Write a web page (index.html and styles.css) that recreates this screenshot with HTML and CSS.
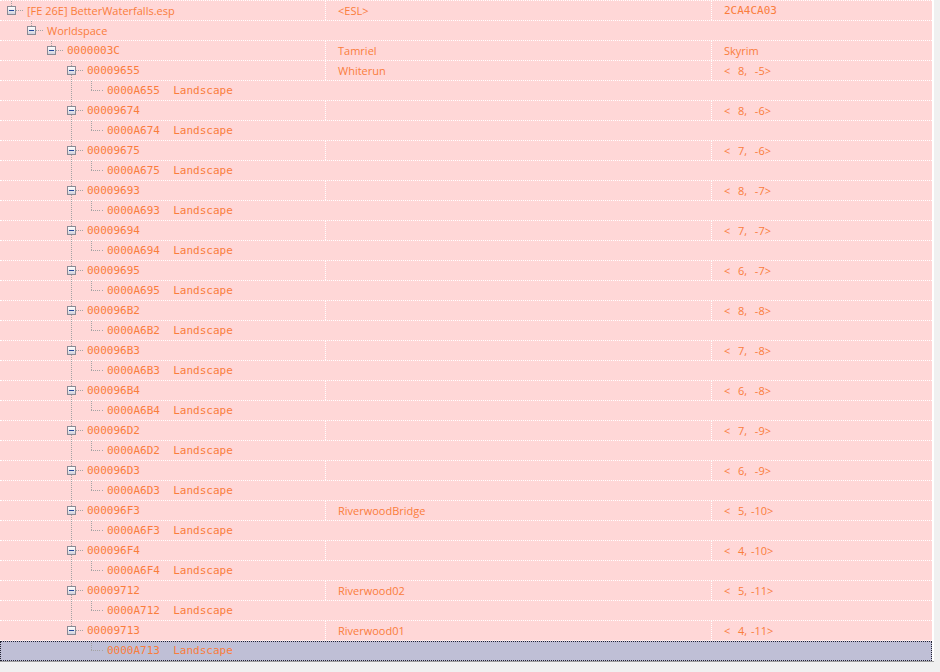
FILE: index.html
```html
<!DOCTYPE html>
<html>
<head>
<meta charset="utf-8">
<link rel="stylesheet" href="styles.css">
</head>
<body>
<div class="frame">
<div class="tree">
  <div class="row">
    <div class="c1"><span class="nu"><span class="box"></span></span><span class="stub"></span><span class="t">[FE 26E] BetterWaterfalls.esp</span></div>
    <div class="c2">&lt;ESL&gt;</div>
    <div class="c3 mono">2CA4CA03</div>
  </div>
  <div class="row">
    <div class="c1 span"><span class="i"></span><span class="nu"><span class="box"></span></span><span class="stub"></span><span class="t">Worldspace</span></div>
  </div>
  <div class="row">
    <div class="c1"><span class="i"></span><span class="i"></span><span class="nu"><span class="box"></span></span><span class="stub"></span><span class="t mono">0000003C</span></div>
    <div class="c2">Tamriel</div>
    <div class="c3">Skyrim</div>
  </div>

  <div class="row">
    <div class="c1"><span class="i"></span><span class="i"></span><span class="i"></span><span class="nud"><span class="box"></span></span><span class="stub"></span><span class="t mono">00009655</span></div>
    <div class="c2">Whiterun</div>
    <div class="c3 pre">&lt;  8,  -5&gt;</div>
  </div>
  <div class="row"><div class="c1 span"><span class="i"></span><span class="i"></span><span class="i"></span><span class="v"></span><span class="el"></span><span class="stub"></span><span class="t mono pre">0000A655  Landscape</span></div></div>

  <div class="row">
    <div class="c1"><span class="i"></span><span class="i"></span><span class="i"></span><span class="nud"><span class="box"></span></span><span class="stub"></span><span class="t mono">00009674</span></div>
    <div class="c2"></div>
    <div class="c3 pre">&lt;  8,  -6&gt;</div>
  </div>
  <div class="row"><div class="c1 span"><span class="i"></span><span class="i"></span><span class="i"></span><span class="v"></span><span class="el"></span><span class="stub"></span><span class="t mono pre">0000A674  Landscape</span></div></div>

  <div class="row">
    <div class="c1"><span class="i"></span><span class="i"></span><span class="i"></span><span class="nud"><span class="box"></span></span><span class="stub"></span><span class="t mono">00009675</span></div>
    <div class="c2"></div>
    <div class="c3 pre">&lt;  7,  -6&gt;</div>
  </div>
  <div class="row"><div class="c1 span"><span class="i"></span><span class="i"></span><span class="i"></span><span class="v"></span><span class="el"></span><span class="stub"></span><span class="t mono pre">0000A675  Landscape</span></div></div>

  <div class="row">
    <div class="c1"><span class="i"></span><span class="i"></span><span class="i"></span><span class="nud"><span class="box"></span></span><span class="stub"></span><span class="t mono">00009693</span></div>
    <div class="c2"></div>
    <div class="c3 pre">&lt;  8,  -7&gt;</div>
  </div>
  <div class="row"><div class="c1 span"><span class="i"></span><span class="i"></span><span class="i"></span><span class="v"></span><span class="el"></span><span class="stub"></span><span class="t mono pre">0000A693  Landscape</span></div></div>

  <div class="row">
    <div class="c1"><span class="i"></span><span class="i"></span><span class="i"></span><span class="nud"><span class="box"></span></span><span class="stub"></span><span class="t mono">00009694</span></div>
    <div class="c2"></div>
    <div class="c3 pre">&lt;  7,  -7&gt;</div>
  </div>
  <div class="row"><div class="c1 span"><span class="i"></span><span class="i"></span><span class="i"></span><span class="v"></span><span class="el"></span><span class="stub"></span><span class="t mono pre">0000A694  Landscape</span></div></div>

  <div class="row">
    <div class="c1"><span class="i"></span><span class="i"></span><span class="i"></span><span class="nud"><span class="box"></span></span><span class="stub"></span><span class="t mono">00009695</span></div>
    <div class="c2"></div>
    <div class="c3 pre">&lt;  6,  -7&gt;</div>
  </div>
  <div class="row"><div class="c1 span"><span class="i"></span><span class="i"></span><span class="i"></span><span class="v"></span><span class="el"></span><span class="stub"></span><span class="t mono pre">0000A695  Landscape</span></div></div>

  <div class="row">
    <div class="c1"><span class="i"></span><span class="i"></span><span class="i"></span><span class="nud"><span class="box"></span></span><span class="stub"></span><span class="t mono">000096B2</span></div>
    <div class="c2"></div>
    <div class="c3 pre">&lt;  8,  -8&gt;</div>
  </div>
  <div class="row"><div class="c1 span"><span class="i"></span><span class="i"></span><span class="i"></span><span class="v"></span><span class="el"></span><span class="stub"></span><span class="t mono pre">0000A6B2  Landscape</span></div></div>

  <div class="row">
    <div class="c1"><span class="i"></span><span class="i"></span><span class="i"></span><span class="nud"><span class="box"></span></span><span class="stub"></span><span class="t mono">000096B3</span></div>
    <div class="c2"></div>
    <div class="c3 pre">&lt;  7,  -8&gt;</div>
  </div>
  <div class="row"><div class="c1 span"><span class="i"></span><span class="i"></span><span class="i"></span><span class="v"></span><span class="el"></span><span class="stub"></span><span class="t mono pre">0000A6B3  Landscape</span></div></div>

  <div class="row">
    <div class="c1"><span class="i"></span><span class="i"></span><span class="i"></span><span class="nud"><span class="box"></span></span><span class="stub"></span><span class="t mono">000096B4</span></div>
    <div class="c2"></div>
    <div class="c3 pre">&lt;  6,  -8&gt;</div>
  </div>
  <div class="row"><div class="c1 span"><span class="i"></span><span class="i"></span><span class="i"></span><span class="v"></span><span class="el"></span><span class="stub"></span><span class="t mono pre">0000A6B4  Landscape</span></div></div>

  <div class="row">
    <div class="c1"><span class="i"></span><span class="i"></span><span class="i"></span><span class="nud"><span class="box"></span></span><span class="stub"></span><span class="t mono">000096D2</span></div>
    <div class="c2"></div>
    <div class="c3 pre">&lt;  7,  -9&gt;</div>
  </div>
  <div class="row"><div class="c1 span"><span class="i"></span><span class="i"></span><span class="i"></span><span class="v"></span><span class="el"></span><span class="stub"></span><span class="t mono pre">0000A6D2  Landscape</span></div></div>

  <div class="row">
    <div class="c1"><span class="i"></span><span class="i"></span><span class="i"></span><span class="nud"><span class="box"></span></span><span class="stub"></span><span class="t mono">000096D3</span></div>
    <div class="c2"></div>
    <div class="c3 pre">&lt;  6,  -9&gt;</div>
  </div>
  <div class="row"><div class="c1 span"><span class="i"></span><span class="i"></span><span class="i"></span><span class="v"></span><span class="el"></span><span class="stub"></span><span class="t mono pre">0000A6D3  Landscape</span></div></div>

  <div class="row">
    <div class="c1"><span class="i"></span><span class="i"></span><span class="i"></span><span class="nud"><span class="box"></span></span><span class="stub"></span><span class="t mono">000096F3</span></div>
    <div class="c2">RiverwoodBridge</div>
    <div class="c3 pre">&lt;  5, -10&gt;</div>
  </div>
  <div class="row"><div class="c1 span"><span class="i"></span><span class="i"></span><span class="i"></span><span class="v"></span><span class="el"></span><span class="stub"></span><span class="t mono pre">0000A6F3  Landscape</span></div></div>

  <div class="row">
    <div class="c1"><span class="i"></span><span class="i"></span><span class="i"></span><span class="nud"><span class="box"></span></span><span class="stub"></span><span class="t mono">000096F4</span></div>
    <div class="c2"></div>
    <div class="c3 pre">&lt;  4, -10&gt;</div>
  </div>
  <div class="row"><div class="c1 span"><span class="i"></span><span class="i"></span><span class="i"></span><span class="v"></span><span class="el"></span><span class="stub"></span><span class="t mono pre">0000A6F4  Landscape</span></div></div>

  <div class="row">
    <div class="c1"><span class="i"></span><span class="i"></span><span class="i"></span><span class="nud"><span class="box"></span></span><span class="stub"></span><span class="t mono">00009712</span></div>
    <div class="c2">Riverwood02</div>
    <div class="c3 pre">&lt;  5, -11&gt;</div>
  </div>
  <div class="row"><div class="c1 span"><span class="i"></span><span class="i"></span><span class="i"></span><span class="v"></span><span class="el"></span><span class="stub"></span><span class="t mono pre">0000A712  Landscape</span></div></div>

  <div class="row">
    <div class="c1"><span class="i"></span><span class="i"></span><span class="i"></span><span class="nu"><span class="box"></span></span><span class="stub"></span><span class="t mono">00009713</span></div>
    <div class="c2">Riverwood01</div>
    <div class="c3 pre">&lt;  4, -11&gt;</div>
  </div>
  <div class="row sel"><div class="c1 span"><span class="i"></span><span class="i"></span><span class="i"></span><span class="i"></span><span class="el"></span><span class="stub"></span><span class="t mono pre">0000A713  Landscape</span></div></div>
</div>
</div>
</body>
</html>
```
FILE: styles.css
```css
html, body {
  margin: 0;
  padding: 0;
}
body {
  background: #f0f0f0;
  font-family: "Open Sans", "Noto Sans", sans-serif;
  font-size: 11px;
  color: #fa7d3c;
}
.frame {
  width: 934px;
  background: #ffffff;
  border-bottom: 1px solid #a0a0a0;
}
.tree {
  width: 932px;
  background: #ffd7d7;
  border-top: 1px dotted #ffffff;
}
.row {
  display: flex;
  height: 19px;
  border-bottom: 1px dotted #ffffff;
  line-height: 20px;
  white-space: nowrap;
}
.row.sel {
  background: #bfbfd6;
  outline: 1px dotted #222233;
  outline-offset: -1px;
}
.c1 {
  display: flex;
  width: 325px;
  padding-left: 1px;
  box-sizing: border-box;
  overflow: hidden;
}
.c1.span {
  width: auto;
  flex: 1;
}
.c2 {
  width: 386px;
  box-sizing: border-box;
  border-left: 1px dotted #ffffff;
  padding-left: 12px;
}
.c3 {
  flex: 1;
  box-sizing: border-box;
  border-left: 1px dotted #ffffff;
  padding-left: 12px;
}
.c3.pre {
  word-spacing: 1px;
}
.mono {
  font-family: "DejaVu Sans Mono", "Liberation Mono", monospace;
  font-size: 11px;
}
.pre {
  white-space: pre;
}
.t {
  margin-left: 3px;
}

/* tree guide cells */
.i, .v, .el, .nu, .nud {
  display: block;
  flex: none;
  width: 20px;
  height: 19px;
  box-sizing: border-box;
}
.v {
  background: repeating-linear-gradient(to bottom, #a3a3a3 0 1px, transparent 1px 2px) 10px 0 / 1px 100% no-repeat;
}
.el {
  background:
    repeating-linear-gradient(to bottom, #a3a3a3 0 1px, transparent 1px 2px) 10px 0 / 1px 9px no-repeat,
    repeating-linear-gradient(to right, #a3a3a3 0 1px, transparent 1px 2px) 10px 9px / 10px 1px no-repeat;
}
.nu, .nud {
  padding: 5px 0 0 6px;
}
.nu {
  background:
    repeating-linear-gradient(to bottom, #a3a3a3 0 1px, transparent 1px 2px) 10px 0 / 1px 5px no-repeat,
    repeating-linear-gradient(to right, #a3a3a3 0 1px, transparent 1px 2px) 15px 9px / 5px 1px no-repeat;
}
.nud {
  background:
    repeating-linear-gradient(to bottom, #a3a3a3 0 1px, transparent 1px 2px) 10px 0 / 1px 100% no-repeat,
    repeating-linear-gradient(to right, #a3a3a3 0 1px, transparent 1px 2px) 15px 9px / 5px 1px no-repeat;
}
.stub {
  display: block;
  flex: none;
  width: 3px;
  height: 19px;
  background: repeating-linear-gradient(to right, transparent 0 1px, #a3a3a3 1px 2px) 0 9px / 3px 1px no-repeat;
}
.box {
  display: block;
  width: 9px;
  height: 9px;
  box-sizing: border-box;
  border: 1px solid #8a8a94;
  background: linear-gradient(#ffffff, #d2d2dc);
}
.box::after {
  content: "";
  display: block;
  width: 5px;
  height: 1px;
  margin: 3px 1px;
  background: #24449a;
}
```
